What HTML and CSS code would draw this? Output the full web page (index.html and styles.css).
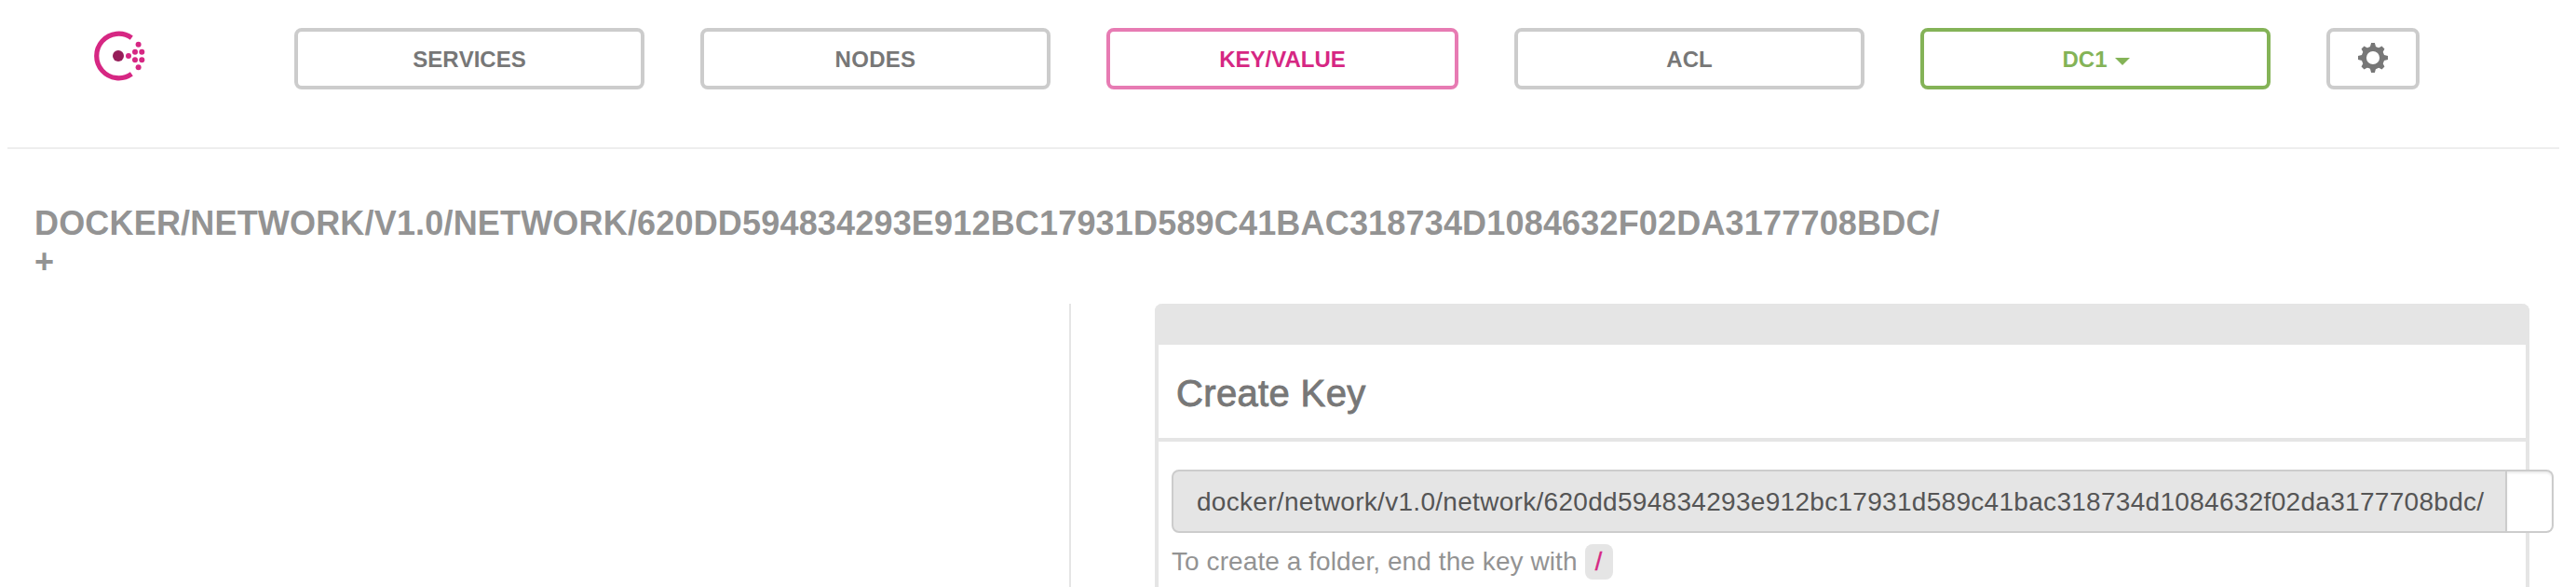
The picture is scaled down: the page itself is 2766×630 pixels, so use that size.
FILE: index.html
```html
<!DOCTYPE html>
<html lang="en">
<head>
<meta charset="utf-8">
<title>Consul - Key/Value</title>
<link rel="stylesheet" href="styles.css">
</head>
<body>
<header class="topbar">
  <a class="logo" href="#" aria-label="Consul">
    <svg width="60" height="60" viewBox="98 30 60 60">
      <path d="M141.3 40.6 A23.8 23.8 0 1 0 141.3 79.4" fill="none" stroke="#d62783" stroke-width="5.2"/>
      <circle cx="127" cy="60" r="6" fill="#961d59"/>
      <g fill="#d62783">
        <circle cx="138" cy="60" r="3"/>
        <circle cx="145" cy="55.8" r="3"/>
        <circle cx="152.3" cy="55.8" r="3"/>
        <circle cx="145" cy="64.3" r="3"/>
        <circle cx="152.3" cy="64.3" r="3"/>
        <circle cx="148.6" cy="47.8" r="3"/>
        <circle cx="148.6" cy="72.3" r="3"/>
      </g>
    </svg>
  </a>
  <nav class="nav">
    <a class="btn" href="#"><span>SERVICES</span></a>
    <a class="btn btn-nodes" href="#"><span>NODES</span></a>
    <a class="btn btn-active" href="#"><span>KEY/VALUE</span></a>
    <a class="btn" href="#"><span>ACL</span></a>
    <a class="btn btn-dc" href="#"><span>DC1</span><i class="caret"></i></a>
    <a class="btn btn-settings" href="#" aria-label="Settings">
      <svg width="32" height="32" viewBox="-16 -16 32 32">
        <g fill="#777">
          <path id="tooth" d="M-5 -9 L-3 -12 L-1.9 -16 H1.9 L3 -12 L5 -9Z"/>
          <use href="#tooth" transform="rotate(45) scale(1.1 .97)"/>
          <use href="#tooth" transform="rotate(90)"/>
          <use href="#tooth" transform="rotate(135) scale(1.1 .97)"/>
          <use href="#tooth" transform="rotate(180)"/>
          <use href="#tooth" transform="rotate(225) scale(1.1 .97)"/>
          <use href="#tooth" transform="rotate(270)"/>
          <use href="#tooth" transform="rotate(315) scale(1.1 .97)"/>
        </g>
        <circle r="9.7" fill="none" stroke="#777" stroke-width="5.2"/>
      </svg>
    </a>
  </nav>
</header>
<h4 class="breadcrumb">
  <span class="path">DOCKER/NETWORK/V1.0/NETWORK/620DD594834293E912BC17931D589C41BAC318734D1084632F02DA3177708BDC/</span>
  <span class="add">+</span>
</h4>
<main class="columns">
  <div class="list"></div>
  <section class="panel">
    <div class="panel-bar"></div>
    <h3 class="panel-title">Create Key</h3>
    <form class="panel-body">
      <div class="input-group">
        <span class="addon">docker/network/v1.0/network/620dd594834293e912bc17931d589c41bac318734d1084632f02da3177708bdc/</span>
        <span class="field"></span>
      </div>
      <p class="help"><span>To create a folder, end the key with</span><code class="code">/</code></p>
    </form>
  </section>
</main>
</body>
</html>
```
FILE: styles.css
```css
* { box-sizing: border-box; }

body {
  margin: 0;
  height: 630px;
  overflow: hidden;
  background: #fff;
  font-family: "Liberation Sans", Arial, sans-serif;
  font-kerning: none;
  color: #777;
}

.topbar {
  display: flex;
  height: 160px;
  margin: 0 18px 0 8px;
  padding: 30px 0 0 90px;
  border-bottom: 2px solid #eee;
}

.logo { width: 218px; height: 60px; }
.logo svg, .btn svg { display: block; }

.nav { display: flex; gap: 60px; }

.btn {
  display: flex;
  align-items: center;
  justify-content: center;
  width: 376px;
  height: 66px;
  padding-top: 1px;
  border: 4px solid #ccc;
  border-radius: 8px;
  color: #777;
  font-size: 24px;
  font-weight: bold;
  text-decoration: none;
}

.btn-nodes { letter-spacing: .3px; }
.btn-active { width: 378px; border-color: #e77bb3; color: #d62783; font-kerning: normal; }
.btn-dc { gap: 8px; padding-left: 1px; border-color: #84b357; color: #84b357; }
.btn-settings { width: 100px; padding: 0 0 2px; }

.caret {
  margin-top: 4px;
  border: 8px solid transparent;
  border-top-color: currentColor;
  border-bottom: 0;
}

.breadcrumb {
  display: flex;
  flex-direction: column;
  height: 166px;
  margin: 0;
  padding: 60px 0 0 37px;
  color: #939393;
  font-size: 36px;
  line-height: 40px;
  white-space: nowrap;
}

.path { letter-spacing: .18px; }
.add { padding-top: 1px; }

.columns { display: flex; height: 304px; }

.list {
  width: 1150px;
  border-right: 2px solid #e5e5e5;
}

.panel {
  width: 1476px;
  margin-left: 90px;
  border: solid #e5e5e5;
  border-width: 0 4px;
  border-radius: 8px 8px 0 0;
}

.panel-bar {
  height: 44px;
  margin: 0 -4px;
  border-radius: 8px 8px 0 0;
  background: #e5e5e5;
}

.panel-title {
  height: 104px;
  margin: 0;
  padding: 0 19px;
  border-bottom: 4px solid #e5e5e5;
  font-size: 40px;
  font-weight: normal;
  line-height: 105px;
  letter-spacing: .35px;
  -webkit-text-stroke: .9px #777;
}

.panel-body { padding: 30px 0 0 14px; }

.input-group { display: flex; width: 1484px; height: 68px; }

.addon {
  width: 1434px;
  padding-left: 25px;
  border: 2px solid #ccc;
  border-radius: 8px 0 0 8px;
  background: #e5e5e5;
  color: #555;
  font-size: 28px;
  line-height: 65px;
  letter-spacing: .3px;
  white-space: nowrap;
}

.field {
  width: 50px;
  border: 2px solid #ccc;
  border-left: 0;
  border-radius: 0 8px 8px 0;
  background: #fff;
  box-shadow: inset 0 2px 2px rgba(0, 0, 0, .075);
}

.help {
  display: flex;
  align-items: center;
  gap: 8px;
  margin: 12px 0 0;
  color: #939393;
  font-size: 28px;
  line-height: 38px;
  letter-spacing: .08px;
  font-kerning: normal;
}

.code {
  width: 30px;
  height: 38px;
  border-radius: 8px;
  background: #e5e5e5;
  color: #d62783;
  font-family: "Liberation Sans", Arial, sans-serif;
  font-size: 27px;
  line-height: 38px;
  text-align: center;
  -webkit-text-stroke: .4px #d62783;
}
```
